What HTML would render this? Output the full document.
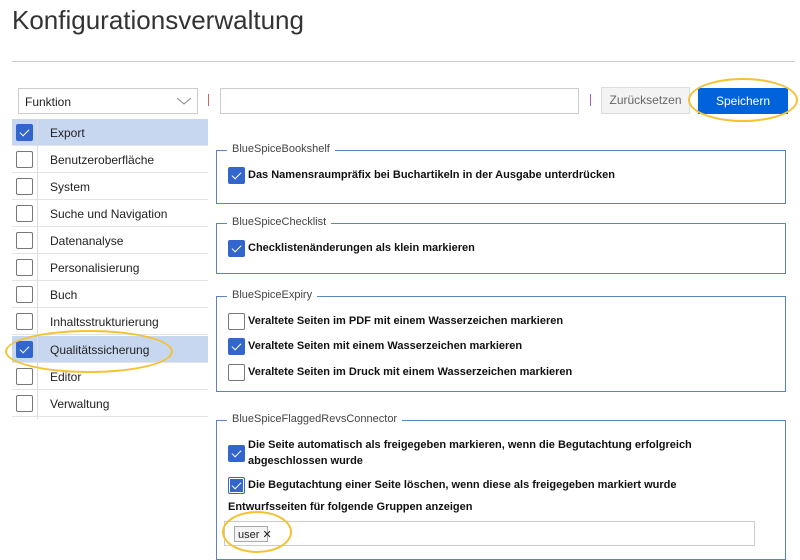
<!DOCTYPE html>
<html><head><meta charset="utf-8"><style>
*{box-sizing:border-box;margin:0;padding:0}
body{width:800px;height:551px;overflow:hidden;background:#fff;font-family:"Liberation Sans",Arial,sans-serif;color:#222;position:relative}
.a{position:absolute}
.cb{position:absolute;width:17px;height:17px;border:1px solid #777;border-radius:2px;background:#fff}
.cb.on{background:#3366cc;border-color:#3366cc}
.cb.on:after{content:"";position:absolute;left:5px;top:2px;width:4px;height:8px;border:solid #fff;border-width:0 1.5px 1.5px 0;transform:rotate(45deg)}
.row{position:absolute;left:12px;width:196px;height:27px;border-bottom:1px solid #e4e4e4;font-size:12px}
.row span{position:absolute;left:38px;top:7px}
.row .cb{left:4px;top:5px}
.row.sel{background:#c8d7f0}
.vd{position:absolute;left:37px;top:119px;width:1px;height:300px;background:#ddd}
.fs{position:absolute;left:216px;width:570px;border:1px solid #5a84bd}
.lg{position:absolute;left:10px;top:-8px;background:#fff;padding:0 5px;font-size:11px;color:#444}
.it{position:absolute;font-size:11px;font-weight:bold;color:#111;white-space:nowrap}
.ell{position:absolute;border:2px solid #f4c232;border-radius:50%}
</style></head><body>
<div class="a" style="left:12px;top:5px;font-size:26px;color:#333">Konfigurationsverwaltung</div>
<div class="a" style="left:12px;top:61px;width:783px;height:1px;background:#ccc"></div>

<div class="a" style="left:18px;top:88px;width:180px;height:26px;border:1px solid #ccc;font-size:12px;padding:6px 6px">Funktion</div>
<svg class="a" style="left:176px;top:96px" width="16" height="10"><path d="M1 2 L8 8 L15 2" fill="none" stroke="#888" stroke-width="1"/></svg>
<div class="a" style="left:208px;top:94px;width:1px;height:12px;background:#c66"></div>
<div class="a" style="left:220px;top:88px;width:359px;height:26px;border:1px solid #ccc"></div>
<div class="a" style="left:590px;top:94px;width:1px;height:12px;background:#96c"></div>
<div class="a" style="left:601px;top:87px;width:89px;height:27px;border:1px solid #ddd;background:#f3f3f3;font-size:12px;color:#666;text-align:center;line-height:25px">Zurücksetzen</div>
<div class="a" style="left:698px;top:88px;width:90px;height:26px;background:#0063db;color:#fff;font-size:12px;text-align:center;line-height:26px">Speichern</div>
<div class="ell" style="left:688px;top:78px;width:110px;height:44px"></div>

<div class="row sel" style="top:119px"><div class="cb on"></div><span>Export</span></div>
<div class="row" style="top:146px"><div class="cb"></div><span>Benutzeroberfläche</span></div>
<div class="row" style="top:173px"><div class="cb"></div><span>System</span></div>
<div class="row" style="top:200px"><div class="cb"></div><span>Suche und Navigation</span></div>
<div class="row" style="top:227px"><div class="cb"></div><span>Datenanalyse</span></div>
<div class="row" style="top:254px"><div class="cb"></div><span>Personalisierung</span></div>
<div class="row" style="top:281px"><div class="cb"></div><span>Buch</span></div>
<div class="row" style="top:308px"><div class="cb"></div><span>Inhaltsstrukturierung</span></div>
<div class="row sel" style="top:336px"><div class="cb on"></div><span>Qualitätssicherung</span></div>
<div class="row" style="top:363px"><div class="cb"></div><span>Editor</span></div>
<div class="row" style="top:390px"><div class="cb"></div><span>Verwaltung</span></div>
<div class="vd"></div>
<div class="ell" style="left:5px;top:330px;width:168px;height:43px"></div>

<div class="fs" style="top:150px;height:54px"><div class="lg">BlueSpiceBookshelf</div>
<div class="cb on" style="left:11px;top:16px"></div><div class="it" style="left:31px;top:18px">Das Namensraumpräfix bei Buchartikeln in der Ausgabe unterdrücken</div></div>

<div class="fs" style="top:223px;height:51px"><div class="lg">BlueSpiceChecklist</div>
<div class="cb on" style="left:11px;top:16px"></div><div class="it" style="left:31px;top:18px">Checklistenänderungen als klein markieren</div></div>

<div class="fs" style="top:296px;height:96px"><div class="lg">BlueSpiceExpiry</div>
<div class="cb" style="left:11px;top:16px"></div><div class="it" style="left:31px;top:18px">Veraltete Seiten im PDF mit einem Wasserzeichen markieren</div>
<div class="cb on" style="left:11px;top:41px"></div><div class="it" style="left:31px;top:43px">Veraltete Seiten mit einem Wasserzeichen markieren</div>
<div class="cb" style="left:11px;top:67px"></div><div class="it" style="left:31px;top:69px">Veraltete Seiten im Druck mit einem Wasserzeichen markieren</div></div>

<div class="fs" style="top:420px;height:140px"><div class="lg">BlueSpiceFlaggedRevsConnector</div>
<div class="cb on" style="left:11px;top:24px"></div><div class="it" style="left:31px;top:16px;line-height:16px">Die Seite automatisch als freigegeben markieren, wenn die Begutachtung erfolgreich<br>abgeschlossen wurde</div>
<div class="cb on" style="left:11px;top:56px;box-shadow:0 0 0 1px #fff inset"></div><div class="it" style="left:31px;top:58px">Die Begutachtung einer Seite löschen, wenn diese als freigegeben markiert wurde</div>
<div class="it" style="left:11px;top:80px">Entwurfsseiten für folgende Gruppen anzeigen</div>
<div class="a" style="left:7px;top:100px;width:531px;height:25px;border:1px solid #ccc"></div>
<div class="a" style="left:17px;top:105px;width:34px;height:16px;border:1px solid #aaa;background:#f4f4f4;font-size:11px;padding:1px 3px;white-space:nowrap">user ✕</div>
</div>
<div class="ell" style="left:222px;top:511px;width:70px;height:42px"></div>
</body></html>
